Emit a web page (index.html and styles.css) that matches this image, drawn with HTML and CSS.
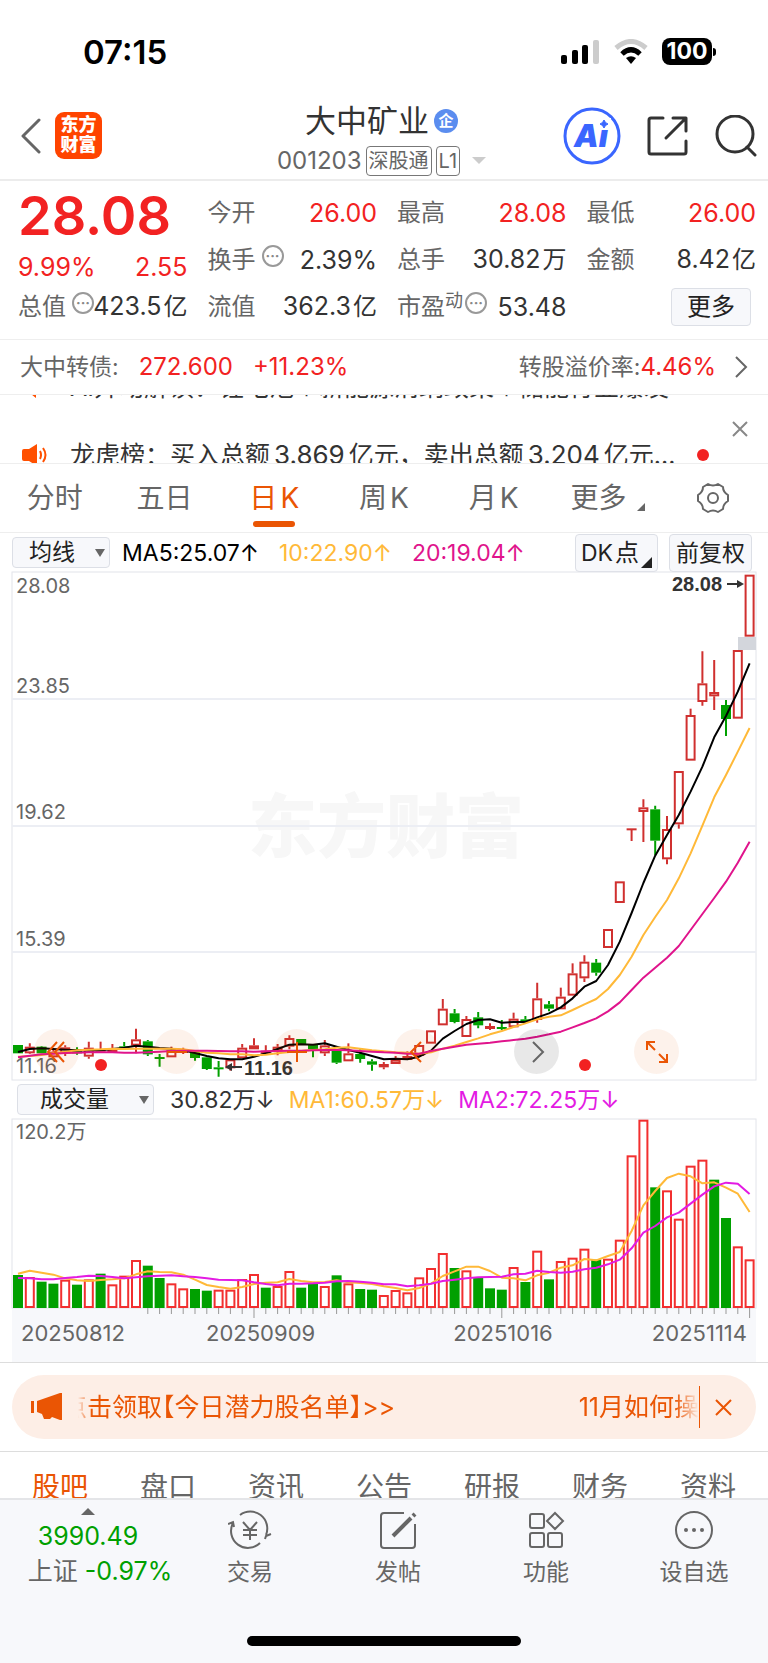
FILE: index.html
```html
<!DOCTYPE html>
<html lang="zh-CN">
<head>
    <meta charset="UTF-8">
    <meta name="viewport" content="width=device-width, initial-scale=1.0">
    <title>大中矿业 001203</title>
    <link rel="stylesheet" href="styles.css">
</head>
<body>
    <div class="status-bar">
        <span class="clock">07:15</span>
        <div class="status-icons">
            <svg width="40" height="26" viewBox="0 0 40 26">
                <rect x="1" y="16" width="6" height="9" rx="2"/>
                <rect x="12" y="11" width="6" height="14" rx="2"/>
                <rect x="22" y="6" width="6" height="19" rx="2"/>
                <rect x="33" y="1" width="6" height="24" rx="2" fill="#ccc"/>
            </svg>
            <svg width="34" height="26" viewBox="0 0 34 26" fill="none" stroke-width="5">
                <path d="M2 9 Q17 -4 32 9" stroke="#ccc"/>
                <path d="M8 15 Q17 6.500 26 15" stroke="#000"/>
                <path d="M12 19 Q17 15.500 22 19 L17 25 Z" fill="#000"/>
            </svg>
            <span class="battery">100</span>
        </div>
    </div>

    <header class="header">
        <button class="icon-btn" aria-label="返回">
            <svg width="22" height="36" viewBox="0 0 22 36" fill="none" stroke="#666" stroke-width="3" stroke-linecap="round" stroke-linejoin="round"><path d="M19 2 L3 18 L19 34"/></svg>
        </button>
        <div class="logo">东方<br>财富</div>
        <div class="title">
            <h1>大中矿业 <span class="company">企</span></h1>
            <p>001203 <span class="tag">深股通</span><span class="tag">L1</span><span class="drop"></span></p>
        </div>
        <div class="header-actions">
            <button class="icon-btn" aria-label="Ai">
                <svg width="58" height="58" viewBox="0 0 58 58">
                    <circle cx="29" cy="29" r="27" fill="#fff" stroke="#3a66ff" stroke-width="3"/>
                    <text x="11" y="40" class="ai-text">Ai</text>
                    <rect x="35" y="11" width="13" height="11" fill="#fff"/>
                    <path d="M41 13 Q42 16 45 17 Q42 18 41 21 Q40 18 37 17 Q40 16 41 13 Z" fill="#3a66ff" stroke="#3a66ff"/>
                </svg>
            </button>
            <button class="icon-btn" aria-label="分享">
                <svg width="42" height="42" viewBox="0 0 42 42" fill="none" stroke="#333" stroke-width="3" stroke-linecap="round" stroke-linejoin="round">
                    <path d="M16 3 H4 Q2 3 2 5 V37 Q2 39 4 39 H37 Q39 39 39 37 V26 M26 3 H39 V16 M38 4 L19 23"/>
                </svg>
            </button>
            <button class="icon-btn" aria-label="搜索">
                <svg width="42" height="42" viewBox="0 0 42 42" fill="none" stroke="#333" stroke-width="3" stroke-linecap="round">
                    <circle cx="20" cy="19" r="18"/><path d="M32 32 L40 40"/>
                </svg>
            </button>
        </div>
    </header>

    <section class="quote">
        <div class="price">
            <strong>28.08</strong>
            <div class="cell red"><b>9.99%</b><b>2.55</b></div>
        </div>
        <div class="cell"><span>今开</span><b class="red">26.00</b></div>
        <div class="cell"><span>最高</span><b class="red">28.08</b></div>
        <div class="cell"><span>最低</span><b class="red">26.00</b></div>
        <div class="cell"><span>换手<i class="more-dots">···</i></span><b>2.39%</b></div>
        <div class="cell"><span>总手</span><b>30.82<em>万</em></b></div>
        <div class="cell"><span>金额</span><b>8.42<em>亿</em></b></div>
        <div class="cell"><span>总值<i class="more-dots">···</i></span><b>423.5<em>亿</em></b></div>
        <div class="cell"><span>流值</span><b>362.3<em>亿</em></b></div>
        <div class="cell"><span>市盈<sup>动</sup><i class="more-dots tight">···</i></span><b>53.48</b></div>
        <div class="cell end"><button class="box-btn more-btn">更多</button></div>
    </section>

    <section class="bond">
        <span>大中转债:</span>
        <b class="red bond-price">272.600</b>
        <b class="red">+11.23%</b>
        <span class="bond-rate">转股溢价率:<b class="red">4.46%</b></span>
        <svg width="14" height="24" viewBox="0 0 14 24" fill="none" stroke="#666" stroke-width="2"><path d="M2 2 L12 12 L2 22"/></svg>
    </section>

    <section class="news">
        <div class="news-list">
            <p>
                <svg width="26" height="24" viewBox="0 0 26 24"><path d="M0 8 H5 L14 1 V23 L5 16 H0 Z" fill="#ff5000"/></svg>
                <span>AI异动解读：锂电池＋新能源消纳政策＋储能行业爆发</span>
            </p>
            <p>
                <svg width="26" height="24" viewBox="0 0 26 24"><path d="M2 6 H7 L15 1 V23 L7 18 H2 Q0 18 0 16 V8 Q0 6 2 6 Z" fill="#ff5000"/><path d="M18 8 Q20 12 18 16 M21 5 Q26 12 21 19" fill="none" stroke="#ff5000" stroke-width="2"/></svg>
                <span>龙虎榜：买入总额<b>3.869</b>亿元，卖出总额<b>3.204</b>亿元...</span>
                <span class="dot"></span>
            </p>
        </div>
        <button class="icon-btn" aria-label="关闭">
            <svg width="16" height="16" viewBox="0 0 16 16" stroke="#888" stroke-width="2"><path d="M1 1 L15 15 M15 1 L1 15"/></svg>
        </button>
    </section>

    <nav class="period">
        <a href="#">分时</a>
        <a href="#">五日</a>
        <a href="#" class="active">日<b>K</b></a>
        <a href="#">周<b>K</b></a>
        <a href="#">月<b>K</b></a>
        <a href="#" class="has-corner">更多</a>
        <button class="icon-btn" aria-label="设置">
            <svg width="34" height="32" viewBox="0 0 34 32" fill="none" stroke="#666" stroke-width="2" stroke-linejoin="round">
                <path d="M12 2 Q17 5 22 2 L27 5 Q27 10 32 13 V19 Q27 22 27 27 L22 30 Q17 27 12 30 L7 27 Q7 22 2 19 V13 Q7 10 7 5 Z"/>
                <circle cx="17" cy="16" r="5"/>
            </svg>
        </button>
    </nav>

    <section class="indicator">
        <label class="select-wrap ma-select"><select aria-label="均线"><option>均线</option></select></label>
        <span class="black">MA5:25.07↑</span>
        <span class="yellow">10:22.90↑</span>
        <span class="pink">20:19.04↑</span>
        <div class="indicator-btns">
            <button class="box-btn dk-btn">DK<em>点</em></button>
            <button class="box-btn">前复权</button>
        </div>
    </section>

    <section class="chart">
        <svg id="priceChart" viewBox="0 0 744 508"></svg>
        <div class="chart-tools">
            <button aria-label="快退"><svg width="22" height="22" viewBox="0 0 22 22"><path d="M11 1 L2 11 L11 21 M18 1 L9 11 L18 21"/></svg></button>
            <button aria-label="缩小"><svg width="22" height="22" viewBox="0 0 22 22"><path d="M1 11 H21"/></svg></button>
            <button aria-label="放大"><svg width="22" height="22" viewBox="0 0 22 22"><path d="M1 11 H21 M11 1 V21"/></svg></button>
            <button aria-label="向左"><svg width="22" height="22" viewBox="0 0 22 22"><path d="M15 1 L5 11 L15 21"/></svg></button>
            <button aria-label="向右" class="grey"><svg width="22" height="22" viewBox="0 0 22 22"><path d="M7 1 L17 11 L7 21"/></svg></button>
            <button aria-label="全屏"><svg width="24" height="24" viewBox="0 0 24 24"><path d="M2 10 V2 H10 M2 2 L10 10 M22 14 V22 H14 M22 22 L14 14"/></svg></button>
        </div>
    </section>

    <section class="indicator volume-bar">
        <label class="select-wrap vol-select"><select aria-label="成交量"><option>成交量</option></select></label>
        <span>30.82万↓</span>
        <span class="yellow">MA1:60.57万↓</span>
        <span class="magenta">MA2:72.25万↓</span>
    </section>

    <section class="chart volume">
        <svg id="volumeChart" viewBox="0 0 744 200"></svg>
        <div class="dates"><span>20250812</span><span>20250909</span><span>20251016</span><span>20251114</span></div>
    </section>

    <section class="promo">
        <div class="promo-inner">
            <svg width="32" height="28" viewBox="0 0 32 28" fill="#ea5504"><path d="M0 8 H3 V20 H0 Z M6 8 L29 0 H31 V27 H29 L21 24 L19 26 H13 L11 21 L6 19 Z"/></svg>
            <div class="marquee"><span>点击领取【今日潜力股名单】&gt;&gt;</span><span>11月如何操作</span></div>
            <button class="icon-btn promo-close" aria-label="关闭">
                <svg width="17" height="17" viewBox="0 0 17 17" stroke="#ea5504" stroke-width="2"><path d="M1 1 L16 16 M16 1 L1 16"/></svg>
            </button>
        </div>
    </section>

    <nav class="tabs">
        <a href="#" class="active">股吧</a>
        <a href="#">盘口</a>
        <a href="#">资讯</a>
        <a href="#">公告</a>
        <a href="#">研报</a>
        <a href="#">财务</a>
        <a href="#">资料</a>
    </nav>

    <footer class="bottom">
        <div class="bottom-row">
            <a href="#" class="index">
                <span class="up"></span>
                <span class="green">3990.49</span>
                <span class="index-change">上证 <span class="green">-0.97%</span></span>
            </a>
            <a href="#">
                <svg width="44" height="40" viewBox="0 0 44 40"><path d="M12 5 A17 17 0 0 1 38 25 M32 33 A17 17 0 0 1 5 13 M0 14 L5 12 L6 17 M43 24 L38 26 L37 29 M15 12 L22 20 L29 12 M22 20 V30 M15 20 H29 M15 25 H29"/></svg>
                <span>交易</span>
            </a>
            <a href="#">
                <svg width="40" height="40" viewBox="0 0 40 40"><path d="M26 3 H6 Q3 3 3 6 V35 Q3 38 6 38 H34 Q37 38 37 35 V14"/><path d="M15 26 L33 8" stroke-width="4"/><path d="M35 6 L37 4" stroke-width="4"/></svg>
                <span>发帖</span>
            </a>
            <a href="#">
                <svg width="40" height="40" viewBox="0 0 40 40"><rect x="4" y="4" width="14" height="14" rx="2"/><rect x="4" y="23" width="14" height="14" rx="2"/><rect x="22" y="23" width="14" height="14" rx="2"/><path d="M29 3 L37 11 L29 19 L21 11 Z"/></svg>
                <span>功能</span>
            </a>
            <a href="#">
                <svg width="40" height="40" viewBox="0 0 40 40"><circle cx="20" cy="20" r="18"/><g class="fill"><circle cx="12" cy="20" r="2"/><circle cx="20" cy="20" r="2"/><circle cx="28" cy="20" r="2"/></g></svg>
                <span>设自选</span>
            </a>
        </div>
        <div class="home-bar"></div>
    </footer>
    <script src="chart.js"></script>
</body>
</html>
```

FILE: styles.css
```css
* {
    box-sizing: border-box;
}
body {
    margin: 0;
    background-color: #fff;
    color: #333;
    font-family: Inter, "Noto Sans CJK SC", sans-serif;
    font-size: 24px;
    line-height: 32px;
}
h1, p {
    margin: 0;
    font-weight: normal;
}
b {
    font-weight: normal;
}
em {
    margin-left: 2px;
    font-size: 24px;
    font-style: normal;
}
a {
    color: inherit;
    text-decoration: none;
}
svg {
    display: block;
}
button, select {
    font: inherit;
    color: #222;
}
.icon-btn {
    display: flex;
    padding: 0;
    border: 0;
    background: none;
}
.red { color: #f22222; }
.green { color: #00a000; }
.yellow { color: #ffb938; }
.pink { color: #e0148c; }
.magenta { color: #e31be3; }
.black { color: #000; }

/* status bar */
.status-bar {
    display: flex;
    justify-content: space-between;
    align-items: center;
    height: 100px;
    padding: 3px 56px 0 83px;
}
.clock {
    color: #000;
    font-size: 33px;
    font-weight: 600;
}
.status-icons {
    display: flex;
    align-items: center;
    gap: 14px;
}
.battery {
    position: relative;
    width: 50px;
    height: 27px;
    border-radius: 8px;
    background-color: #000;
    color: #fff;
    font-size: 23px;
    font-weight: 700;
    line-height: 27px;
    text-align: center;
}
.battery::after {
    content: "";
    position: absolute;
    right: -4px;
    top: 10px;
    width: 3px;
    height: 8px;
    border-radius: 0 3px 3px 0;
    background-color: #000;
}

/* header */
.header {
    display: flex;
    align-items: center;
    height: 81px;
    padding: 0 11px 8px 20px;
    border-bottom: 2px solid #ececec;
}
.logo {
    width: 47px;
    height: 47px;
    margin-left: 13px;
    padding-top: 3px;
    border-radius: 9px;
    background-color: #ff4400;
    color: #fff;
    font-size: 18px;
    font-weight: 900;
    line-height: 20px;
    text-align: center;
}
.title {
    flex: 1;
    padding: 8px 0 0 98px;
    text-align: center;
}
.title h1 {
    display: flex;
    align-items: center;
    justify-content: center;
    gap: 5px;
    font-size: 31px;
    line-height: 42px;
}
.company {
    width: 24px;
    height: 24px;
    border-radius: 50%;
    background-color: #5b8def;
    color: #fff;
    font-size: 15px;
    font-weight: 700;
    line-height: 23px;
}
.title p {
    display: flex;
    align-items: center;
    justify-content: center;
    gap: 4px;
    height: 38px;
    color: #666;
    font-size: 24px;
}
.tag {
    padding: 0 2px;
    border: 1px solid #777;
    border-radius: 4px;
    font-size: 20px;
    line-height: 28px;
}
.drop {
    margin-left: 8px;
    border: 7px solid transparent;
    border-top-color: #ccc;
    border-bottom: 0;
}
.header-actions {
    display: flex;
    align-items: center;
    gap: 26px;
}
.ai-text {
    fill: #3a66ff;
    font-size: 31px;
    font-weight: 900;
    font-style: italic;
}

/* quote */
.quote {
    display: grid;
    grid-template-columns: repeat(4, 1fr);
    grid-auto-rows: 47px;
    column-gap: 20px;
    height: 159px;
    padding: 8px 12px 0 18px;
    border-bottom: 1px solid #eee;
}
.quote b {
    font-size: 25px;
}
.price {
    grid-row: span 2;
}
.price strong {
    display: block;
    color: #f22222;
    font-size: 54px;
    font-weight: 600;
    line-height: 54px;
}
.price .cell {
    height: 48px;
}
.cell {
    display: flex;
    align-items: center;
    justify-content: space-between;
    min-width: 0;
    white-space: nowrap;
}
.cell > span {
    display: flex;
    align-items: center;
    color: #666;
}
.cell.end {
    justify-content: flex-end;
}
.cell sup {
    align-self: flex-start;
    font-size: 18px;
    line-height: 20px;
}
.more-dots {
    width: 22px;
    height: 22px;
    margin: -8px -8px 0 6px;
    border: 2px solid #999;
    border-radius: 50%;
    color: #888;
    font-size: 14px;
    font-weight: 700;
    font-style: normal;
    line-height: 18px;
    text-align: center;
}
.more-dots.tight {
    margin-left: 2px;
}
.box-btn {
    padding: 0 6px;
    border: 1px solid #dcdfe6;
    border-radius: 4px;
    background-color: #f7f8fb;
    font-size: 23px;
    line-height: 36px;
    white-space: nowrap;
}
.more-btn {
    width: 80px;
    margin-right: 5px;
    font-size: 24px;
}

/* convertible bond */
.bond {
    display: flex;
    align-items: center;
    height: 55px;
    padding: 0 20px;
    border-bottom: 1px solid #eee;
    color: #666;
    font-size: 23px;
}
.bond b {
    font-size: 24px;
}
.bond-price {
    margin: 0 20px;
}
.bond-rate {
    margin-left: auto;
    margin-right: 18px;
}

/* news ticker */
.news {
    display: flex;
    justify-content: space-between;
    height: 69px;
    padding: 0 20px 0 22px;
    border-bottom: 1px solid #eee;
    overflow: hidden;
}
.news-list {
    margin-top: -41px;
}
.news-list p {
    display: flex;
    align-items: center;
    height: 70px;
    font-size: 25px;
    white-space: nowrap;
}
.news-list p:first-child {
    height: 66px;
}
.news-list svg {
    margin-right: 22px;
}
.news-list b {
    margin: 0 4px;
    font-size: 26px;
}
.news .icon-btn {
    align-self: center;
}
.dot {
    width: 12px;
    height: 12px;
    margin-left: 22px;
    border-radius: 50%;
    background-color: #f22222;
}

/* period tabs */
.period {
    display: grid;
    grid-template-columns: repeat(7, 1fr);
    align-items: center;
    justify-items: center;
    height: 69px;
    border-bottom: 1px solid #eee;
    color: #666;
    font-size: 28px;
}
.period a {
    position: relative;
    line-height: 68px;
}
.period b {
    margin-left: 3px;
}
.period .active {
    color: #ea5504;
}
.period .active::after {
    content: "";
    position: absolute;
    left: 4px;
    right: 4px;
    bottom: 5px;
    height: 6px;
    border-radius: 3px;
    background-color: #ea5504;
}
.has-corner {
    margin-right: 10px;
}
.has-corner::after {
    content: "";
    position: absolute;
    right: -19px;
    bottom: 21px;
    border-bottom: 8px solid #666;
    border-left: 8px solid transparent;
}

/* indicator rows */
.indicator {
    display: flex;
    align-items: center;
    height: 39px;
    padding: 0 16px 0 12px;
    font-size: 23px;
    white-space: nowrap;
}
.indicator > span {
    margin-right: 20px;
}
.select-wrap {
    position: relative;
    margin-right: 12px;
}
.select-wrap::after {
    content: "";
    position: absolute;
    right: 5px;
    top: 12px;
    border: 5px solid transparent;
    border-top: 8px solid #666;
    border-bottom: 0;
}
.select-wrap select {
    display: block;
    appearance: none;
    width: 98px;
    height: 31px;
    padding: 0 0 0 16px;
    border: 1px solid #dcdfe6;
    border-radius: 4px;
    background-color: #f7f8fb;
    line-height: 29px;
}
.vol-select select {
    width: 137px;
    padding-left: 22px;
}
.indicator-btns {
    display: flex;
    gap: 11px;
    margin-left: auto;
}
.dk-btn {
    position: relative;
    padding: 0 18px 0 5px;
}
.dk-btn::after {
    content: "";
    position: absolute;
    right: 5px;
    bottom: 3px;
    border-bottom: 11px solid #222;
    border-left: 11px solid transparent;
}
.volume-bar {
    padding-left: 17px;
}
.volume-bar .select-wrap {
    margin-right: 16px;
}
.volume-bar > span {
    margin-right: 14px;
}

/* charts */
.chart {
    position: relative;
    margin: 0 12px;
}
.chart > svg {
    width: 100%;
    height: auto;
    overflow: visible;
}
.watermark {
    fill: #f7f7f7;
    font-size: 69px;
    font-weight: 900;
}
.axis-label {
    fill: #666;
    font-size: 20px;
}
.mark {
    fill: #333;
    font-family: "Liberation Sans", sans-serif;
    font-size: 20px;
    font-weight: bold;
}
.chart-tools {
    position: absolute;
    left: 22px;
    right: 77px;
    bottom: 6px;
    display: flex;
    justify-content: space-between;
}
.chart-tools button {
    display: flex;
    align-items: center;
    justify-content: center;
    width: 45px;
    height: 45px;
    padding: 0;
    border: 0;
    border-radius: 50%;
    background-color: rgba(234, 85, 4, 0.08);
}
.chart-tools .grey {
    background-color: rgba(0, 0, 0, 0.09);
}
.chart-tools svg {
    fill: none;
    stroke: #ea5504;
    stroke-width: 2;
}
.chart-tools .grey svg {
    stroke: #666;
}
.volume {
    background-color: #f7f8fb;
}
.dates {
    display: flex;
    justify-content: space-between;
    padding: 0 9px 15px;
    color: #666;
    font-size: 22px;
    line-height: 28px;
}
.dates span:nth-child(3) {
    margin-left: 57px;
}
.dates span:nth-child(4) {
    margin-left: 18px;
}

/* promotion */
.promo {
    padding: 12px;
    border-top: 1px solid #ddd;
    border-bottom: 1px solid #ddd;
}
.promo-inner {
    display: flex;
    align-items: center;
    height: 64px;
    padding: 0 24px 0 19px;
    border-radius: 32px;
    background-color: #fdeee6;
    color: #ea5504;
    font-size: 25px;
}
.marquee {
    flex: 1;
    display: flex;
    justify-content: space-between;
    margin-left: 15px;
    overflow: hidden;
    white-space: nowrap;
    font-feature-settings: "halt";
    -webkit-mask-image: linear-gradient(to right, transparent, #000 14px, #000 calc(100% - 24px), transparent);
    mask-image: linear-gradient(to right, transparent, #000 14px, #000 calc(100% - 24px), transparent);
}
.marquee span:first-child {
    margin-left: -16px;
}
.marquee span:last-child {
    margin-right: -25px;
}
.promo-close {
    align-items: center;
    height: 42px;
    padding-left: 15px;
    border-left: 1px solid #ea5504;
}

/* section tabs, partly under the bottom bar */
.tabs {
    display: flex;
    justify-content: space-around;
    height: 46px;
    padding: 15px 6px 0;
    overflow: hidden;
    color: #666;
    font-size: 28px;
    line-height: 40px;
}
.tabs .active {
    color: #ea5504;
}

/* bottom bar */
.bottom {
    padding-bottom: 17px;
    border-top: 2px solid #e4e5e8;
    background-color: #f7f8fb;
    color: #666;
    font-size: 23px;
}
.bottom-row {
    display: flex;
    height: 136px;
}
.bottom-row a {
    flex: 1;
    display: flex;
    flex-direction: column;
    align-items: center;
    gap: 6px;
    padding-top: 10px;
}
.bottom-row svg {
    fill: none;
    stroke: #666;
    stroke-width: 2;
}
.bottom-row .fill {
    fill: #666;
    stroke: none;
}
.bottom-row .index {
    flex: 0 0 176px;
    gap: 0;
    padding-top: 8px;
    font-size: 25px;
    line-height: 35px;
}
.index-change {
    padding-left: 24px;
    white-space: nowrap;
}
.up {
    margin-bottom: 4px;
    border: 7px solid transparent;
    border-top: 0;
    border-bottom-color: #666;
}
.home-bar {
    width: 274px;
    height: 10px;
    margin: 0 auto;
    border-radius: 5px;
    background-color: #000;
}
```

FILE: chart.js
```js
const STEP = 11.8;
const RED = '#d0302f';
const VOL_RED = '#f22f2f';
const GREEN = '#00a000';

// [color, high, body top, body bottom, low], three units per pixel
const candles = [
    ['g', 195, 195, 220, 220], ['r', 190, 200, 220, 222], ['g', 198, 200, 220, 220], ['r', 205, 215, 232, 232],
    ['r', 196, 202, 220, 228], ['g', 202, 207, 220, 224], ['r', 185, 203, 230, 236], ['r', 185, 209, 213, 213],
    ['r', 192, 207, 214, 214], ['g', 186, 199, 205, 205], ['r', 146, 178, 197, 220], ['g', 180, 184, 223, 228],
    ['g', 222, 231, 233, 260], ['r', 200, 210, 232, 232], ['r', 203, 210, 216, 222], ['g', 215, 215, 234, 242],
    ['g', 228, 232, 267, 270], ['g', 243, 262, 264, 290], ['r', 238, 238, 265, 272], ['r', 192, 203, 235, 235],
    ['r', 175, 196, 208, 208], ['r', 196, 212, 218, 222], ['r', 192, 200, 214, 226], ['r', 166, 174, 200, 208],
    ['g', 177, 177, 192, 192], ['g', 192, 192, 208, 232], ['r', 180, 196, 220, 228], ['g', 212, 212, 248, 252],
    ['r', 190, 220, 244, 244], ['g', 208, 222, 237, 248], ['g', 238, 244, 254, 272], ['r', 246, 252, 262, 268],
    ['r', 228, 239, 252, 252], ['r', 214, 228, 240, 240], ['r', 195, 195, 228, 228], ['r', 151, 151, 191, 191],
    ['r', 57, 86, 136, 136], ['g', 87, 100, 126, 130], ['r', 108, 117, 171, 171], ['g', 96, 112, 136, 145],
    ['r', 130, 138, 145, 150], ['g', 120, 141, 143, 150], ['r', 98, 116, 142, 142], ['g', 108, 118, 120, 126],
    ['r', 8, 55, 120, 128], ['g', 63, 73, 86, 94], ['r', 23, 50, 88, 88], ['r', -50, -20, 47, 47],
    ['r', -74, -55, -5, 6], ['g', -63, -52, -22, -13], ['r', -153, -153, -96, -96], ['r', -296, -296, -231, -231],
    ['r', -455, -455, -453, -417], ['r', -542, -518, -504, -414], ['g', -523, -512, -418, -374], ['r', -492, -453, -362, -347],
    ['r', -627, -627, -467, -454], ['r', -814, -795, -658, -658], ['r', -986, -890, -834, -823], ['r', -960, -864, -851, -810],
    ['g', -840, -825, -783, -732], ['r', -990, -990, -784, -784], ['r', -1216, -1216, -1030, -1030]
];
const ma5 = [216, 207, 205, 207, 209, 211, 212, 211, 207, 203, 197, 200, 204, 206, 211, 219, 228, 235, 238, 238, 230, 220, 207, 194, 193, 194, 190, 200, 210, 218, 228, 238, 236, 238, 230, 212, 176, 153, 132, 120, 118, 128, 126, 126, 112, 100, 82, 55, 20, 3, -45, -115, -201, -291, -373, -435, -495, -565, -640, -728, -792, -865, -950];
const ma10 = [230, 228, 225, 220, 215, 211, 209, 208, 206, 207, 206, 206, 206, 206, 208, 213, 218, 220, 223, 223, 226, 224, 220, 216, 213, 210, 208, 203, 202, 206, 211, 214, 217, 218, 221, 217, 206, 197, 186, 175, 163, 153, 141, 130, 118, 110, 106, 90, 73, 57, 27, -15, -70, -135, -189, -240, -305, -380, -463, -548, -615, -685, -756];
const ma20 = [232, 227, 223, 221, 219, 218, 217, 217, 217, 218, 218, 217, 215, 213, 212, 212, 212, 213, 214, 214, 215, 214, 213, 212, 212, 211, 210, 210, 211, 213, 215, 217, 218, 221, 221, 213, 206, 200, 194, 191, 188, 184, 180, 176, 170, 163, 155, 142, 129, 115, 94, 67, 30, -7, -37, -67, -102, -150, -198, -246, -295, -352, -415];

const volumes = [99, 93, 79, 73, 85, 70, 86, 103, 71, 97, 144, 127, 90, 74, 59, 57, 52, 55, 55, 87, 102, 61, 66, 111, 61, 74, 66, 98, 74, 57, 55, 39, 54, 47, 92, 120, 165, 120, 113, 93, 59, 55, 123, 78, 172, 86, 141, 151, 178, 145, 148, 205, 458, 565, 362, 353, 268, 427, 445, 385, 270, 185, 146];
const volumeColors = 'grggrgrgrrrggrrggrrrrgrrggrgrggrrrrrrgrgggrgrgrrrgrrrrgrrrrggrr';
const vma1 = [103, 112, 106, 100, 89, 83, 81, 84, 86, 89, 101, 110, 108, 107, 100, 85, 69, 63, 58, 63, 72, 76, 77, 87, 81, 77, 78, 83, 77, 75, 72, 65, 60, 53, 60, 73, 96, 110, 124, 124, 111, 91, 89, 83, 98, 106, 121, 128, 147, 143, 156, 168, 231, 308, 351, 390, 403, 395, 374, 377, 361, 343, 288];
const vma2 = [90, 89, 86, 86, 90, 93, 97, 96, 93, 89, 92, 95, 97, 98, 95, 93, 89, 85, 84, 83, 77, 72, 68, 73, 73, 74, 76, 80, 81, 79, 76, 71, 71, 65, 68, 73, 81, 85, 89, 92, 93, 94, 101, 103, 112, 108, 106, 109, 116, 121, 131, 145, 179, 226, 246, 272, 286, 313, 340, 365, 376, 373, 342];

const x = i => 6 + i * STEP;
const priceY = v => 408 + v / 3;
const volumeY = v => 189 - v / 3;

function line(values, y, color) {
    const points = values.map((v, i) => `${x(i)},${y(v)}`).join(' ');
    return `<polyline points="${points}" fill="none" stroke="${color}" stroke-width="2" stroke-linejoin="round"/>`;
}

function drawPrice() {
    let svg = '<rect x="0" y="0" width="744" height="508" fill="#fff" stroke="#e2e4ea"/>';
    svg += '<text class="watermark" x="236" y="280">东方财富</text>';
    [127, 254, 380].forEach(y => {
        svg += `<path d="M0 ${y} H744" stroke="#eceef4" stroke-width="2"/>`;
    });
    svg += '<rect x="726" y="65" width="18" height="13" fill="#d3d6dc"/>';
    candles.forEach(([c, high, top, bottom, low], i) => {
        const color = c === 'g' ? GREEN : RED;
        const t = priceY(top);
        const b = priceY(bottom);
        svg += `<path d="M${x(i)} ${priceY(high)} V${t} M${x(i)} ${b} V${priceY(low)}" stroke="${color}" stroke-width="2"/>`;
        if (c === 'g' || b - t < 2) {
            svg += `<rect x="${x(i) - 5}" y="${t}" width="10" height="${Math.max(b - t, 2)}" fill="${color}"/>`;
        } else {
            svg += `<rect x="${x(i) - 4}" y="${t + 1}" width="8" height="${Math.max(b - t - 2, 1)}" fill="#fff" stroke="${color}" stroke-width="2"/>`;
        }
    });
    svg += line(ma5, priceY, '#000') + line(ma10, priceY, '#ffb938') + line(ma20, priceY, '#e0148c');
    [[28.08, 21], [23.85, 121], [19.62, 247], [15.39, 374], [11.16, 501]].forEach(([label, y]) => {
        svg += `<text class="axis-label" x="4" y="${y}">${label.toFixed(2)}</text>`;
    });
    svg += '<text class="mark" x="660" y="19">28.08</text><path d="M715 12 H729" stroke="#333" stroke-width="2"/><path d="M732 12 L725 8 V16 Z" fill="#333"/>';
    svg += '<text class="mark" x="232" y="503">11.16</text><path d="M217 495 H230" stroke="#333" stroke-width="2"/><path d="M213 495 L220 491 V499 Z" fill="#333"/>';
    svg += '<circle cx="89" cy="493" r="6" fill="#f22222"/><circle cx="573" cy="493" r="6" fill="#f22222"/>';
    document.getElementById('priceChart').innerHTML = svg;
}

function drawVolume() {
    let svg = '<rect x="0" y="0" width="744" height="189" fill="#fff" stroke="#e2e4ea"/>';
    svg += '<text class="axis-label" x="4" y="20">120.2万</text>';
    volumes.forEach((v, i) => {
        const y = volumeY(v);
        if (volumeColors[i] === 'g') {
            svg += `<rect x="${x(i) - 5}" y="${y}" width="10" height="${189 - y}" fill="${GREEN}"/>`;
        } else {
            svg += `<rect x="${x(i) - 4}" y="${y + 1}" width="8" height="${187 - y}" fill="#fff" stroke="${VOL_RED}" stroke-width="2"/>`;
        }
        if (i > 10) {
            const length = i === 20 || i === 41 || i === 62 ? 10 : 6;
            svg += `<path d="M${x(i)} 189 v${length}" stroke="#999"/>`;
        }
    });
    svg += line(vma1, volumeY, '#ffb938') + line(vma2, volumeY, '#e31be3');
    document.getElementById('volumeChart').innerHTML = svg;
}

drawPrice();
drawVolume();
```
